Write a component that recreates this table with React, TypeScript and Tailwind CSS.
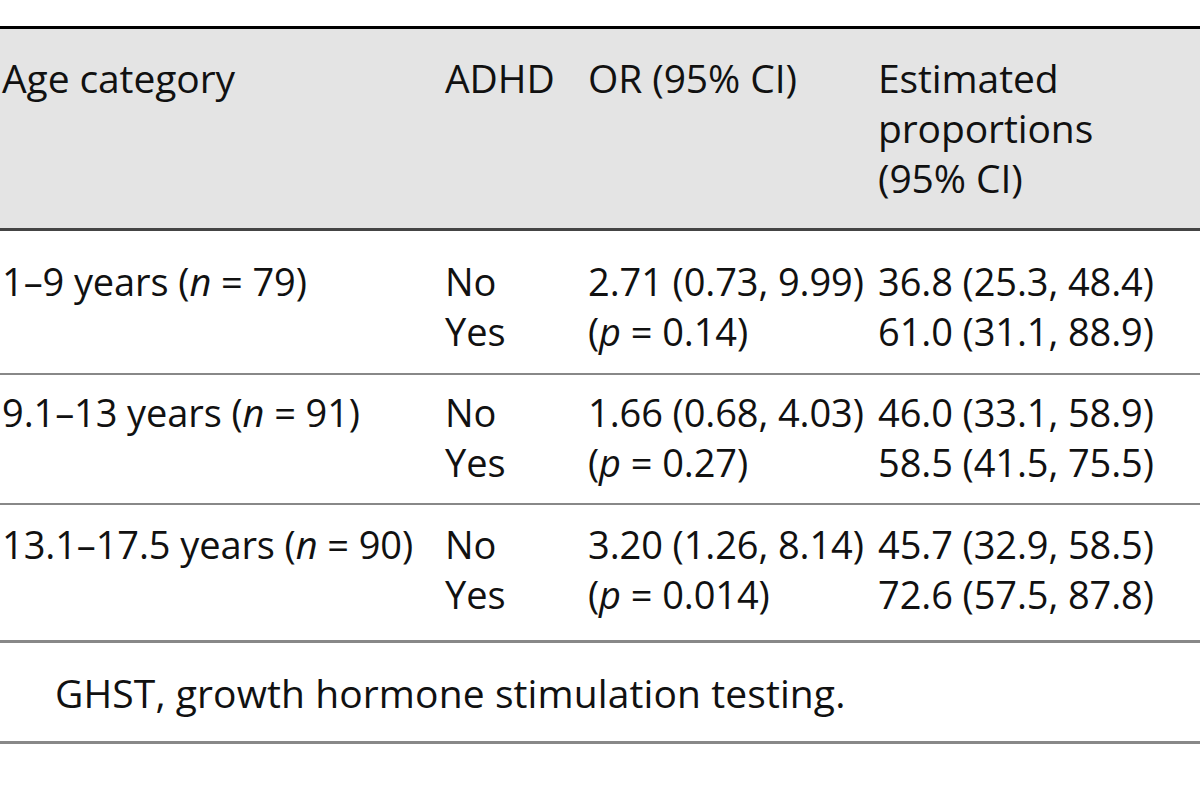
const ROWS = [
  { n: '1–9 years', count: '79', or: '2.71 (0.73, 9.99)', p: '0.14', no: '36.8 (25.3, 48.4)', yes: '61.0 (31.1, 88.9)' },
  { n: '9.1–13 years', count: '91', or: '1.66 (0.68, 4.03)', p: '0.27', no: '46.0 (33.1, 58.9)', yes: '58.5 (41.5, 75.5)' },
  { n: '13.1–17.5 years', count: '90', or: '3.20 (1.26, 8.14)', p: '0.014', no: '45.7 (32.9, 58.5)', yes: '72.6 (57.5, 87.8)' },
]

const GRID = 'grid grid-cols-[443px_143px_290px_1fr] pl-[2px]'

// spacing per row so the baselines land where the figure has them
const ROW_PAD = [
  'pt-[25px] pb-[17px] border-b-2 border-[#888]',
  'pt-[12px] pb-[16px] border-b-2 border-[#888]',
  'pt-[14px] pb-[21px] border-b-[3px] border-[#888]',
]

export default function App() {
  return (
    <div className="w-[1200px] h-[786px] bg-white text-[#111] text-[38px] leading-[50px] font-['Open_Sans',sans-serif] tracking-[-0.1px] pt-[26px] overflow-hidden">
      {/* Header */}
      <div className={`${GRID} text-[39px] bg-[#e4e4e4] border-t-[3px] border-black border-b-[3px] border-b-[#444] pt-[24px] pb-[25px]`}>
        <div>Age category</div>
        <div>ADHD</div>
        <div>OR (95% CI)</div>
        <div>
          Estimated
          <br />
          proportions
          <br />
          (95% CI)
        </div>
      </div>

      {/* Body */}
      {ROWS.map((r, i) => (
        <div key={r.n} className={`${GRID} ${ROW_PAD[i]}`}>
          <div>
            {r.n} (<i>n</i> = {r.count})
          </div>
          <div>
            No
            <br />
            Yes
          </div>
          <div>
            {r.or}
            <br />
            (<i>p</i> = {r.p})
          </div>
          <div>
            {r.no}
            <br />
            {r.yes}
          </div>
        </div>
      ))}

      {/* Footnote */}
      <div className="pl-[55px] pt-[25px] pb-[23px] text-[39px] tracking-[0.1px] border-b-[3px] border-[#888]">
        GHST, growth hormone stimulation testing.
      </div>
    </div>
  )
}
